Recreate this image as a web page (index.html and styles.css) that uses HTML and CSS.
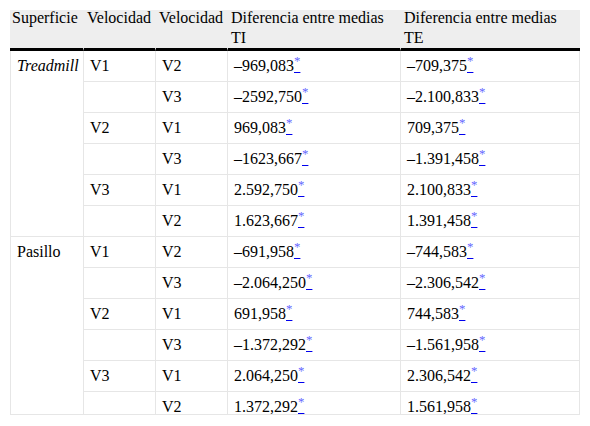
FILE: index.html
```html
<!DOCTYPE html>
<html lang="es">
<head>
<meta charset="utf-8">
<title>Tabla</title>
<link rel="stylesheet" href="styles.css">
</head>
<body>
<div class="frame">
<table class="data">
<colgroup>
<col class="c1"><col class="c2"><col class="c3"><col class="c4"><col class="c5">
</colgroup>
<thead>
<tr>
<th><div class="h">Superficie</div></th><th><div class="h">Velocidad</div></th><th><div class="h">Velocidad</div></th><th><div class="h">Diferencia entre medias<br>TI</div></th><th><div class="h">Diferencia entre medias<br>TE</div></th>
</tr>
</thead>
<tbody>
<tr><td rowspan="6"><i>Treadmill</i></td><td>V1</td><td>V2</td><td>–969,083<a href="#n" class="fn"><sup>*</sup></a></td><td>–709,375<a href="#n" class="fn"><sup>*</sup></a></td></tr>
<tr><td></td><td>V3</td><td>–2592,750<a href="#n" class="fn"><sup>*</sup></a></td><td>–2.100,833<a href="#n" class="fn"><sup>*</sup></a></td></tr>
<tr><td>V2</td><td>V1</td><td>969,083<a href="#n" class="fn"><sup>*</sup></a></td><td>709,375<a href="#n" class="fn"><sup>*</sup></a></td></tr>
<tr><td></td><td>V3</td><td>–1623,667<a href="#n" class="fn"><sup>*</sup></a></td><td>–1.391,458<a href="#n" class="fn"><sup>*</sup></a></td></tr>
<tr><td>V3</td><td>V1</td><td>2.592,750<a href="#n" class="fn"><sup>*</sup></a></td><td>2.100,833<a href="#n" class="fn"><sup>*</sup></a></td></tr>
<tr><td></td><td>V2</td><td>1.623,667<a href="#n" class="fn"><sup>*</sup></a></td><td>1.391,458<a href="#n" class="fn"><sup>*</sup></a></td></tr>
<tr><td rowspan="6">Pasillo</td><td>V1</td><td>V2</td><td>–691,958<a href="#n" class="fn"><sup>*</sup></a></td><td>–744,583<a href="#n" class="fn"><sup>*</sup></a></td></tr>
<tr><td></td><td>V3</td><td>–2.064,250<a href="#n" class="fn"><sup>*</sup></a></td><td>–2.306,542<a href="#n" class="fn"><sup>*</sup></a></td></tr>
<tr><td>V2</td><td>V1</td><td>691,958<a href="#n" class="fn"><sup>*</sup></a></td><td>744,583<a href="#n" class="fn"><sup>*</sup></a></td></tr>
<tr><td></td><td>V3</td><td>–1.372,292<a href="#n" class="fn"><sup>*</sup></a></td><td>–1.561,958<a href="#n" class="fn"><sup>*</sup></a></td></tr>
<tr><td>V3</td><td>V1</td><td>2.064,250<a href="#n" class="fn"><sup>*</sup></a></td><td>2.306,542<a href="#n" class="fn"><sup>*</sup></a></td></tr>
<tr><td></td><td>V2</td><td>1.372,292<a href="#n" class="fn"><sup>*</sup></a></td><td>1.561,958<a href="#n" class="fn"><sup>*</sup></a></td></tr>
</tbody>
</table>
</div>
</body>
</html>
```
FILE: styles.css
```css
html, body {
  margin: 0;
  padding: 0;
  background: #fff;
}
body {
  font-family: "Liberation Serif", "Times New Roman", serif;
  font-size: 16px;
  color: #000;
}
.frame {
  margin: 10px 10px 0 10px;
  width: 570px;
  height: 404px;
  overflow: hidden;
  border-bottom: 1px solid #e6e6e6;
}
.data {
  width: 570px;
  border-collapse: separate;
  border-spacing: 0;
  table-layout: fixed;
}
.c1 { width: 73px; }
.c2 { width: 72px; }
.c3 { width: 72px; }
.c4 { width: 173px; }
.c5 { width: 180px; }
.data th {
  background: #eeeeee;
  font-weight: normal;
  text-align: left;
  vertical-align: top;
  padding: 0 3px;
  height: 41px;
  box-sizing: border-box;
  border-bottom: 3px solid #000;
  border-left: 1px solid #eeeeee;
}
.data th:first-child { border-left: 0; padding-left: 2px; }
.h {
  line-height: 20px;
  margin-top: -2px;
  margin-bottom: -2px;
}
.data td {
  vertical-align: top;
  line-height: 20px;
  padding: 5px 6px 5px 6px;
  border-left: 1px solid #e6e6e6;
  border-bottom: 1px solid #e6e6e6;
}
.data tr td:last-child { border-right: 1px solid #e6e6e6; }
.fn {
  color: #0000ee;
  text-decoration: underline;
}
.fn sup {
  font-size: 0.8em;
  line-height: 0;
  color: #6666ff;
}
```
